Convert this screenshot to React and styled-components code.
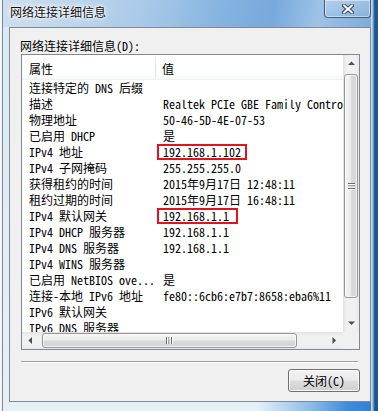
import React from 'react';
import styled, { createGlobalStyle } from 'styled-components';

const GlobalStyle = createGlobalStyle`
  html, body {
    margin: 0;
    padding: 0;
    background: #eef4f9;
  }
  body {
    font-family: "Noto Sans Mono CJK SC", "Noto Sans CJK SC", "Liberation Mono", monospace;
    font-size: 12px;
    color: #000;
  }
`;

const Window = styled.div`
    width: 378px;
    height: 411px;
    box-sizing: border-box;
    display: flex;
    flex-direction: column;
    padding: 0 7px 9px 9px;
    background:
        linear-gradient(to right, #f3f7fb 0 2px, #7c8896 2px 3px, transparent 3px),
        linear-gradient(to right, #c3d8ea 0 1px, #9fbfdc 1px 2px, #2f679f 3px, #1b4f86 5px, #24608f 7px) right top / 7px 100% no-repeat,
        linear-gradient(to right, transparent 0, transparent 68%, #8cbde9 82%, #3c8ddb 92%, #2f7fd2 100%) left bottom / 100% 9px no-repeat,
        linear-gradient(100deg, #cfdfee 0%, #bcd4ea 22%, #a6c8e8 40%, #86b4e0 58%, #78a9dc 72%, #9dc3e7 84%, #7aa8d8 100%) left top / 100% 27px no-repeat,
        linear-gradient(to bottom, #dbe8f3, #e6f0f7);
`;

const TitleBar = styled.div`
    height: 27px;
    display: flex;
    align-items: flex-start;
    flex-shrink: 0;
`;

const Title = styled.span`
    font-family: "Noto Sans CJK SC", sans-serif;
    font-size: 12px;
    line-height: 16px;
    padding: 4px 0 0 1px;
    color: #111;
    text-shadow: 0 0 6px #fff, 0 0 4px #fff, 0 0 2px rgba(255,255,255,0.9);
`;

const CloseButton = styled.div`
    margin-left: auto;
    width: 47px;
    height: 18px;
    box-sizing: border-box;
    display: flex;
    align-items: center;
    justify-content: center;
    border: 1px solid rgba(38, 58, 86, 0.75);
    border-top: none;
    border-radius: 0 0 4px 4px;
    background: linear-gradient(to bottom, rgba(255,255,255,0.25), rgba(255,255,255,0.05));
    box-shadow: inset 0 0 0 1px rgba(255,255,255,0.45);
`;

const Panel = styled.div`
    flex: 1;
    display: flex;
    flex-direction: column;
    background: #f0f0f0;
    border: 1px solid #7f8c98;
    padding: 9px 10px 0 11px;
`;

const Label = styled.div`
    height: 17px;
    line-height: 17px;
    margin-left: -1px;
`;

const ListView = styled.div`
    width: 339px;
    height: 296px;
    box-sizing: border-box;
    border: 1px solid #828790;
    background: #fff;
    display: grid;
    grid-template-columns: 1fr 16px;
    grid-template-rows: 1fr 17px;
`;

const Content = styled.div`
    overflow: hidden;
    white-space: nowrap;
`;

const Header = styled.div`
    height: 25px;
    display: flex;
    align-items: center;
    padding-top: 2px;
    box-sizing: border-box;
    background: linear-gradient(to bottom, #fff 0%, #fff 70%, #f7f8f9 100%);
    border-bottom: 1px solid #f0f1f3;
`;

const HeaderCell = styled.div`
    width: ${p => p.$w ? p.$w + 'px' : 'auto'};
    box-sizing: border-box;
    padding-left: ${p => p.$pad}px;
    border-right: ${p => p.$w ? '1px solid #e3e5e8' : 'none'};
    height: 100%;
    display: flex;
    align-items: center;
`;

const Row = styled.div`
    height: 16px;
    display: flex;
    line-height: 16px;
`;

const Cell = styled.div`
    width: ${p => p.$w ? p.$w + 'px' : 'auto'};
    flex-shrink: 0;
    box-sizing: border-box;
    padding-left: 7px;
    overflow: hidden;
`;

// red annotation box drawn round a value
const Marked = styled.span`
    display: inline-block;
    height: 16px;
    box-sizing: border-box;
    line-height: 12px;
    margin-left: -6px;
    padding: 0 ${p => p.$pr || 4}px 0 4px;
    border: 2px solid #e3121b;
`;

const VScroll = styled.div`
    display: flex;
    flex-direction: column;
    background: linear-gradient(to right, #e3e3e3, #f1f1f1 25%, #f1f1f1 75%, #e9e9e9);
`;

const HScroll = styled.div`
    display: flex;
    background: linear-gradient(to bottom, #e3e3e3, #f1f1f1 25%, #f1f1f1 75%, #e9e9e9);
`;

const ArrowBox = styled.div`
    width: ${p => p.$h ? '17px' : '16px'};
    height: 17px;
    flex-shrink: 0;
    display: flex;
    align-items: center;
    justify-content: center;
`;

const Track = styled.div`
    flex: 1;
    display: flex;
    flex-direction: ${p => p.$h ? 'row' : 'column'};
`;

const Thumb = styled.div`
    box-sizing: border-box;
    border: 1px solid #979797;
    border-radius: 3px;
    display: flex;
    align-items: center;
    justify-content: center;
    ${p => p.$h ? `
        height: 15px;
        width: 255px;
        margin: 1px 0 0 3px;
        background: linear-gradient(to bottom, #f6f6f6, #eaeaea 48%, #dadada 52%, #d4d4d4);
    ` : `
        width: 14px;
        height: 224px;
        margin: 2px 0 0 1px;
        background: linear-gradient(to right, #f6f6f6, #eaeaea 48%, #dadada 52%, #d4d4d4);
    `}
    box-shadow: inset 0 0 0 1px rgba(255,255,255,0.7);
`;

const Corner = styled.div`
    background: #f0f0f0;
`;

const Separator = styled.div`
    margin-top: 11px;
    border-top: 1px solid #a0a0a0;
    border-bottom: 1px solid #fff;
    margin-right: 2px;
`;

const ButtonRow = styled.div`
    display: flex;
    justify-content: flex-end;
    margin-top: 6px;
`;

const Button = styled.div`
    width: 72px;
    height: 23px;
    box-sizing: border-box;
    border: 1px solid #707070;
    border-radius: 3px;
    background: linear-gradient(to bottom, #f2f2f2 0%, #ebebeb 48%, #dddddd 52%, #cfcfcf 100%);
    box-shadow: inset 0 0 0 1px #fbfbfb;
    display: flex;
    align-items: center;
    justify-content: center;
    line-height: 16px;
`;

const Arrow = ({ dir }) => {
    const pts = {
        up: '0,4 3.5,0.5 7,4',
        down: '0,0.5 3.5,4 7,0.5',
        left: '4,0 0.5,3.5 4,7',
        right: '0.5,0 4,3.5 0.5,7',
    }[dir];
    const vert = dir === 'up' || dir === 'down';
    return (
        <svg width={vert ? 7 : 5} height={vert ? 5 : 7} viewBox={vert ? '0 0 7 5' : '0 0 5 7'}>
            <polygon points={pts} fill="#4d4d4d" />
        </svg>
    );
};

const Grip = ({ h }) => (
    h ? (
        <svg width="7" height="7" viewBox="0 0 7 7">
            {[0.5, 3, 5.5].map(x => (
                <g key={x}>
                    <line x1={x} y1="0" x2={x} y2="7" stroke="#6a6a6a" strokeWidth="1" />
                    <line x1={x + 1} y1="0" x2={x + 1} y2="7" stroke="#fff" strokeWidth="1" />
                </g>
            ))}
        </svg>
    ) : (
        <svg width="7" height="7" viewBox="0 0 7 7">
            {[0.5, 3, 5.5].map(y => (
                <g key={y}>
                    <line x1="0" y1={y} x2="7" y2={y} stroke="#6a6a6a" strokeWidth="1" />
                    <line x1="0" y1={y + 1} x2="7" y2={y + 1} stroke="#fff" strokeWidth="1" />
                </g>
            ))}
        </svg>
    )
);

const rows = [
    ['连接特定的 DNS 后缀', ''],
    ['描述', 'Realtek PCIe GBE Family Controller'],
    ['物理地址', '50-46-5D-4E-07-53'],
    ['已启用 DHCP', '是'],
    ['IPv4 地址', '192.168.1.102', 4],
    ['IPv4 子网掩码', '255.255.255.0'],
    ['获得租约的时间', '2015年9月17日 12:48:11'],
    ['租约过期的时间', '2015年9月17日 16:48:11'],
    ['IPv4 默认网关', '192.168.1.1', 7],
    ['IPv4 DHCP 服务器', '192.168.1.1'],
    ['IPv4 DNS 服务器', '192.168.1.1'],
    ['IPv4 WINS 服务器', ''],
    ['已启用 NetBIOS ove...', '是'],
    ['连接-本地 IPv6 地址', 'fe80::6cb6:e7b7:8658:eba6%11'],
    ['IPv6 默认网关', ''],
    ['IPv6 DNS 服务器', ''],
];

export default function App() {
    return (
        <>
            <GlobalStyle />
            <Window>
                <TitleBar>
                    <Title>网络连接详细信息</Title>
                    <CloseButton>
                        <svg width="12" height="10" viewBox="0 0 12 10">
                            <path d="M2 1.5 L10 8.5 M10 1.5 L2 8.5" stroke="#33455c" strokeWidth="4" strokeLinecap="square" />
                            <path d="M2 1.5 L10 8.5 M10 1.5 L2 8.5" stroke="#fff" strokeWidth="2" strokeLinecap="square" />
                        </svg>
                    </CloseButton>
                </TitleBar>
                <Panel>
                    <Label>网络连接详细信息(D):</Label>
                    <ListView>
                        <Content>
                            <Header>
                                <HeaderCell $w={134} $pad={7}>属性</HeaderCell>
                                <HeaderCell $pad={6}>值</HeaderCell>
                            </Header>
                            {rows.map(([name, value, mark]) => (
                                <Row key={name}>
                                    <Cell $w={134}>{name}</Cell>
                                    <Cell>{mark ? <Marked $pr={mark}>{value}</Marked> : value}</Cell>
                                </Row>
                            ))}
                        </Content>
                        <VScroll>
                            <ArrowBox><Arrow dir="up" /></ArrowBox>
                            <Track>
                                <Thumb><Grip /></Thumb>
                            </Track>
                            <ArrowBox><Arrow dir="down" /></ArrowBox>
                        </VScroll>
                        <HScroll>
                            <ArrowBox $h><Arrow dir="left" /></ArrowBox>
                            <Track $h>
                                <Thumb $h><Grip h /></Thumb>
                            </Track>
                            <ArrowBox $h><Arrow dir="right" /></ArrowBox>
                        </HScroll>
                        <Corner />
                    </ListView>
                    <Separator />
                    <ButtonRow>
                        <Button>关闭(C)</Button>
                    </ButtonRow>
                </Panel>
            </Window>
        </>
    );
}
